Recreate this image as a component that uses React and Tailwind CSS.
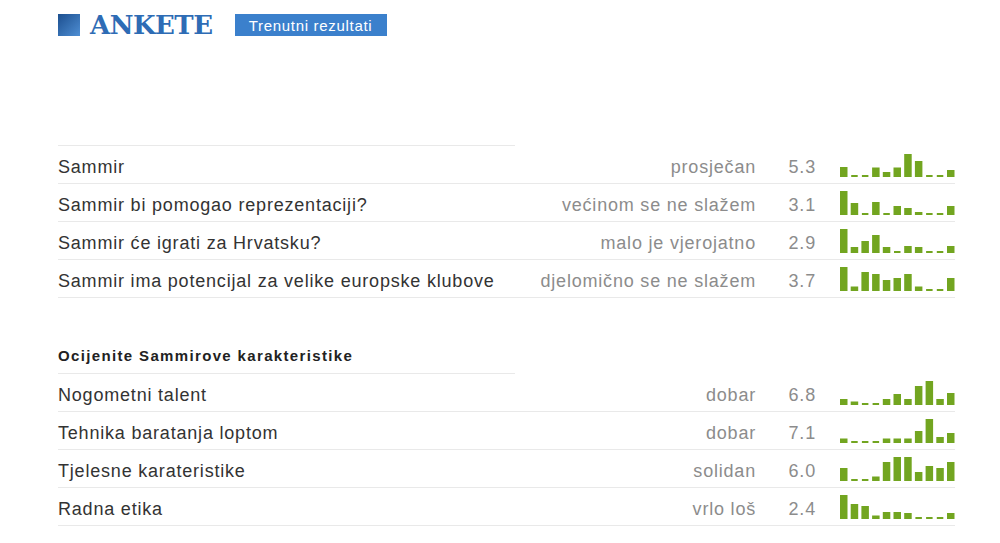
import React from 'react';

const green = '#72a520';

const pollRows = [
    { label: 'Sammir', answer: 'prosječan', score: '5.3', bars: [10, 0, 0, 9.5, 5, 9.5, 23, 16, 0, 0, 7] },
    { label: 'Sammir bi pomogao reprezentaciji?', answer: 'većinom se ne slažem', score: '3.1', bars: [24, 12, 0, 13, 0, 9, 7, 3, 0, 0, 9] },
    { label: 'Sammir će igrati za Hrvatsku?', answer: 'malo je vjerojatno', score: '2.9', bars: [24, 6, 12, 18, 6, 0, 7, 6, 0, 0, 7] },
    { label: 'Sammir ima potencijal za velike europske klubove', answer: 'djelomično se ne slažem', score: '3.7', bars: [24, 4.5, 19, 17, 11, 13, 17, 4.5, 0, 0, 13] },
];

const traitRows = [
    { label: 'Nogometni talent', answer: 'dobar', score: '6.8', bars: [6, 3.5, 0, 0, 6, 11, 6, 19, 24, 6, 12] },
    { label: 'Tehnika baratanja loptom', answer: 'dobar', score: '7.1', bars: [4.5, 0, 0, 0, 4.5, 4.5, 4.5, 12, 24, 6, 10] },
    { label: 'Tjelesne karateristike', answer: 'solidan', score: '6.0', bars: [13, 0, 0, 4.5, 19, 24, 24, 9, 15, 13, 19] },
    { label: 'Radna etika', answer: 'vrlo loš', score: '2.4', bars: [24, 15, 13, 3.5, 7, 7, 6, 0, 0, 0, 6] },
];

// small distribution chart, empty values drawn as a flat dash
const Spark = ({ bars }) => (
    <svg width="115" height="24" viewBox="0 0 115 24" className="ml-[24px] mt-[1px] shrink-0">
        {bars.map((h, i) => {
            const x = i * 10.7;
            if (!h) return <rect key={i} x={x + 0.5} y={22} width={6.5} height={2} fill={green} />;
            return <rect key={i} x={x} y={24 - h} width={7.5} height={h} fill={green} />;
        })}
    </svg>
);

const Row = ({ row }) => (
    <div className="flex items-center h-[38px] border-b border-[#e9e9e9]">
        <div className="flex-1 pt-[4px] text-[18px] tracking-[0.8px] text-[#333] leading-none">{row.label}</div>
        <div className="pt-[4px] text-[18px] tracking-[0.8px] text-[#8c8c8c] leading-none text-right">{row.answer}</div>
        <div className="w-[60px] pt-[4px] text-[18px] tracking-[0.8px] text-[#8c8c8c] leading-none text-right">{row.score}</div>
        <Spark bars={row.bars} />
    </div>
);

export default function App() {
    return (
        <div className="bg-white min-h-[543px] pl-[58px] pt-[14px]" style={{ fontFamily: '"Liberation Sans", Arial, sans-serif' }}>
            <div className="w-[897px]">
                {/* Header */}
                <div className="flex items-center h-[22px]">
                    <div className="w-[22px] h-[22px] bg-gradient-to-br from-[#1c4f8f] to-[#4f8fd4]" />
                    <h1
                        className="ml-[10px] text-[26px] font-bold text-[#2e6cb5] leading-none tracking-[-0.5px]"
                        style={{ fontFamily: '"DejaVu Serif", "Liberation Serif", serif' }}
                    >
                        ANKETE
                    </h1>
                    <button className="ml-[22px] h-[22px] w-[152px] bg-[#3b80cc] text-white text-[15px] tracking-[0.7px] leading-none">
                        Trenutni rezultati
                    </button>
                </div>

                {/* Poll */}
                <div className="mt-[109px] w-[457px] border-b border-[#e9e9e9]" />
                {pollRows.map((r) => <Row key={r.label} row={r} />)}

                {/* Traits */}
                <div className="h-[76px] w-[457px] flex items-end pb-[8px] border-b border-[#e9e9e9]">
                    <h3 className="text-[15px] font-bold tracking-[1.35px] text-[#222] leading-[18px]">Ocijenite Sammirove karakteristike</h3>
                </div>
                {traitRows.map((r) => <Row key={r.label} row={r} />)}
            </div>
        </div>
    );
}
